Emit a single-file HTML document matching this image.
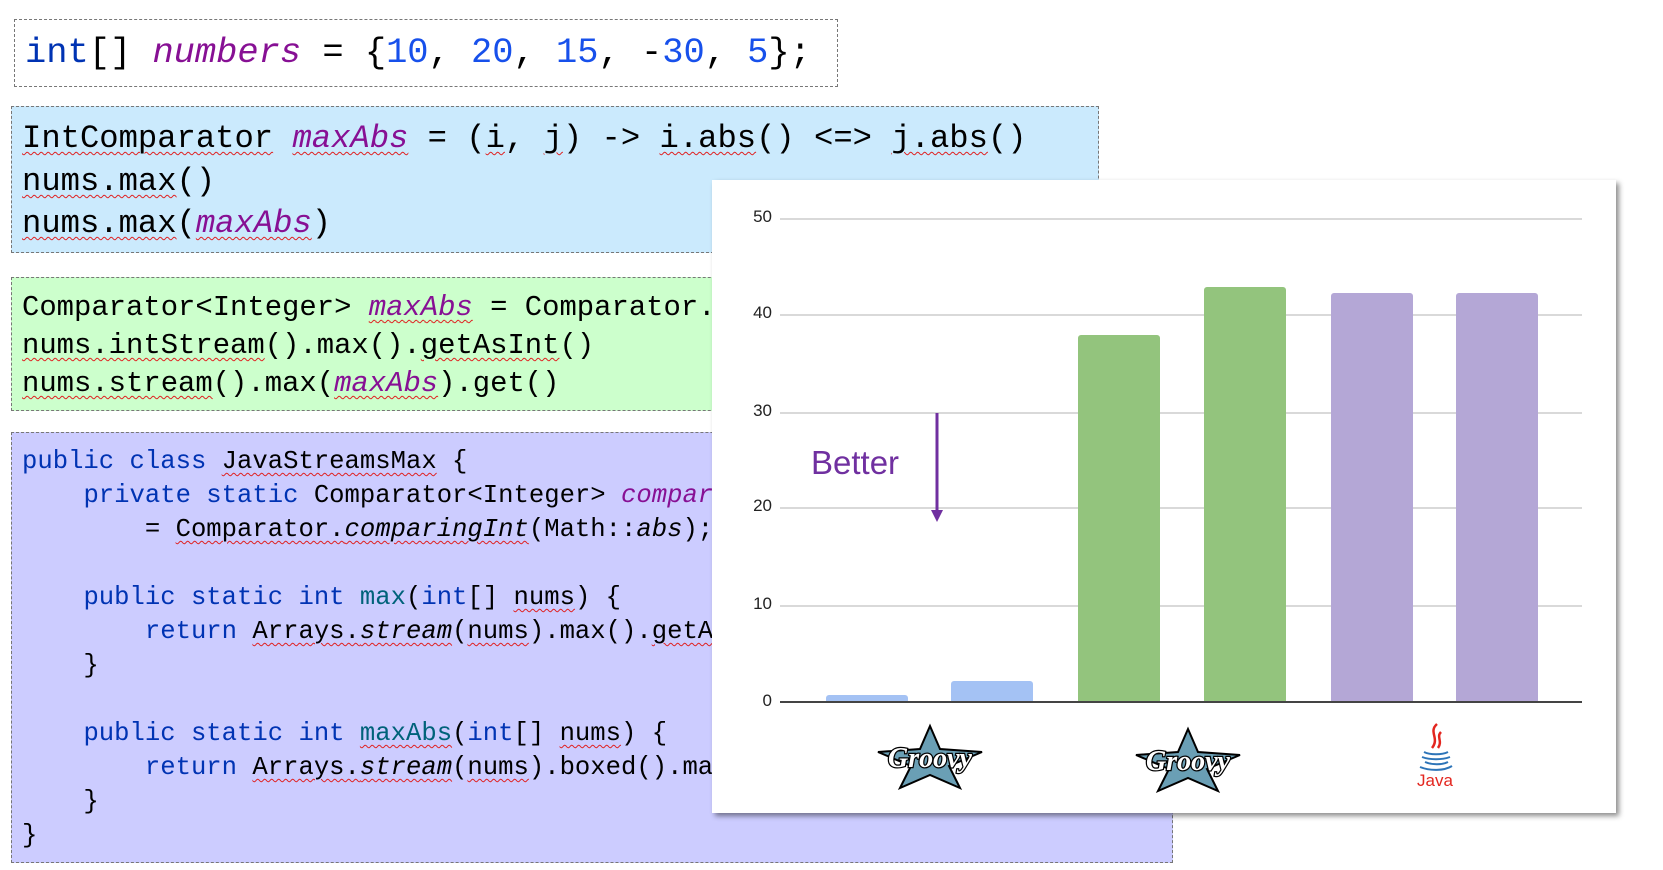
<!DOCTYPE html>
<html><head><meta charset="utf-8"><style>
body{margin:0;width:1663px;height:870px;background:#fff;position:relative;overflow:hidden;font-family:"Liberation Mono",monospace;}
.box{position:absolute;border:1px dashed #777;box-sizing:border-box;}
.l{position:absolute;left:0;white-space:pre;color:#000;}
.s{text-decoration:underline wavy #e02020;text-decoration-thickness:1px;text-underline-offset:4px;}
.v{color:#871094;font-style:italic;}
.k{color:#0033b3;}
.n{color:#1750eb;}
.m{color:#00627a;}
.i{font-style:italic;}
.grid{position:absolute;left:780px;width:802px;height:2px;background:#d9d9d9;}
.lab{position:absolute;width:60px;left:712px;text-align:right;font:17px "Liberation Sans",sans-serif;color:#222;}
.bar{position:absolute;border-radius:3px 3px 0 0;}
</style></head><body>

<div class="box" style="left:14px;top:19px;width:824px;height:68px;background:#fff;">
<div class="l" style="left:10px;top:13px;font-size:35.4px;line-height:40px;"><span class="k">int</span>[] <span class="v">numbers</span> = {<span class="n">10</span>, <span class="n">20</span>, <span class="n">15</span>, -<span class="n">30</span>, <span class="n">5</span>};</div>
</div>

<div class="box" style="left:11px;top:106px;width:1088px;height:147px;background:#cbeafd;font-size:32.2px;">
<div class="l" style="left:10px;top:11px;line-height:42px;"><span class="s">IntComparator</span> <span class="v s">maxAbs</span> = (<span class="s">i</span>, <span class="s">j</span>) -&gt; <span class="s">i.abs</span>() &lt;=&gt; <span class="s">j.abs</span>()</div>
<div class="l" style="left:10px;top:54px;line-height:42px;"><span class="s">nums.max</span>()</div>
<div class="l" style="left:10px;top:96px;line-height:42px;"><span class="s">nums.max</span>(<span class="v s">maxAbs</span>)</div>
</div>

<div class="box" style="left:11px;top:277px;width:800px;height:134px;background:#ccffcc;font-size:28.9px;">
<div class="l" style="left:10px;top:11px;line-height:38px;">Comparator&lt;Integer&gt; <span class="v s">maxAbs</span> = Comparator.</div>
<div class="l" style="left:10px;top:49px;line-height:38px;"><span class="s">nums.intStream</span>().max().<span class="s">getAsInt</span>()</div>
<div class="l" style="left:10px;top:87px;line-height:38px;"><span class="s">nums.stream</span>().max(<span class="v s">maxAbs</span>).get()</div>
</div>

<div class="box" style="left:11px;top:432px;width:1162px;height:431px;background:#ccccff;font-size:25.6px;">
<div style="position:absolute;left:10px;top:12px;line-height:34px;white-space:pre;"><span class="k">public class</span> <span class="s">JavaStreamsMax</span> {
    <span class="k">private static</span> Comparator&lt;Integer&gt; <span class="v">comparator</span>
        = <span class="s">Comparator.<i>comparingInt</i></span>(Math::<i>abs</i>);

    <span class="k">public static int</span> <span class="m">max</span>(<span class="k">int</span>[] <span class="s">nums</span>) {
        <span class="k">return</span> <span class="s">Arrays.<i>stream</i></span>(<span class="s">nums</span>).max().<span class="s">getAsInt</span>();
    }

    <span class="k">public static int</span> <span class="m s">maxAbs</span>(<span class="k">int</span>[] <span class="s">nums</span>) {
        <span class="k">return</span> <span class="s">Arrays.<i>stream</i></span>(<span class="s">nums</span>).boxed().max(comparator).get();
    }
}</div>
</div>

<div style="position:absolute;left:712px;top:180px;width:904px;height:633px;background:#fff;box-shadow:3px 3px 5px rgba(0,0,0,0.45);"></div>

<div class="grid" style="top:218px"></div><div class="lab" style="top:207px">50</div>
<div class="grid" style="top:314px"></div><div class="lab" style="top:303px">40</div>
<div class="grid" style="top:412px"></div><div class="lab" style="top:401px">30</div>
<div class="grid" style="top:507px"></div><div class="lab" style="top:496px">20</div>
<div class="grid" style="top:605px"></div><div class="lab" style="top:594px">10</div>
<div class="lab" style="top:691px">0</div>

<div class="bar" style="left:826px;width:82px;top:695px;height:7px;background:#a4c2f4"></div>
<div class="bar" style="left:951px;width:82px;top:681px;height:21px;background:#a4c2f4"></div>
<div class="bar" style="left:1078px;width:82px;top:335px;height:367px;background:#93c47d"></div>
<div class="bar" style="left:1204px;width:82px;top:287px;height:415px;background:#93c47d"></div>
<div class="bar" style="left:1331px;width:82px;top:293px;height:409px;background:#b4a7d6"></div>
<div class="bar" style="left:1456px;width:82px;top:293px;height:409px;background:#b4a7d6"></div>
<div style="position:absolute;left:780px;top:701px;width:802px;height:2px;background:#444"></div>

<div style="position:absolute;left:811px;top:444px;font:33px 'Liberation Sans',sans-serif;color:#7030a0;">Better</div>
<svg style="position:absolute;left:925px;top:412px" width="24" height="112"><line x1="12" y1="1" x2="12" y2="100" stroke="#7030a0" stroke-width="3"/><polygon points="6,98 18,98 12,110" fill="#7030a0"/></svg>

<svg style="position:absolute;left:870px;top:722px" width="120" height="70" viewBox="0 0 120 70">
<polygon points="60,4 70,27 112,30 79,44 90,66 60,53 30,66 41,44 8,30 50,27" fill="#6a9fb5" stroke="#000" stroke-width="2"/>
<text x="60" y="45" text-anchor="middle" font-family="Liberation Serif,serif" font-weight="bold" font-style="italic" font-size="28" fill="#fff" stroke="#000" stroke-width="2.5" paint-order="stroke">Groovy</text>
</svg>
<svg style="position:absolute;left:1128px;top:725px" width="120" height="70" viewBox="0 0 120 70">
<polygon points="60,4 70,27 112,30 79,44 90,66 60,53 30,66 41,44 8,30 50,27" fill="#6a9fb5" stroke="#000" stroke-width="2"/>
<text x="60" y="45" text-anchor="middle" font-family="Liberation Serif,serif" font-weight="bold" font-style="italic" font-size="28" fill="#fff" stroke="#000" stroke-width="2.5" paint-order="stroke">Groovy</text>
</svg>
<svg style="position:absolute;left:1410px;top:722px" width="50" height="66" viewBox="0 0 50 66">
<path d="M27,2 C18,10 30,16 22,26 M31,10 C26,15 33,19 28,26" stroke="#e3261f" stroke-width="2.5" fill="none"/>
<path d="M14,30 C20,33 32,33 38,30 M12,35 C20,38 32,38 40,35 M15,40 C22,43 32,43 38,40 M10,45 C20,49 34,49 42,44" stroke="#2d74b8" stroke-width="2" fill="none"/>
<text x="25" y="64" text-anchor="middle" font-family="Liberation Sans,sans-serif" font-size="17" fill="#e3261f">Java</text>
</svg>
</body></html>
